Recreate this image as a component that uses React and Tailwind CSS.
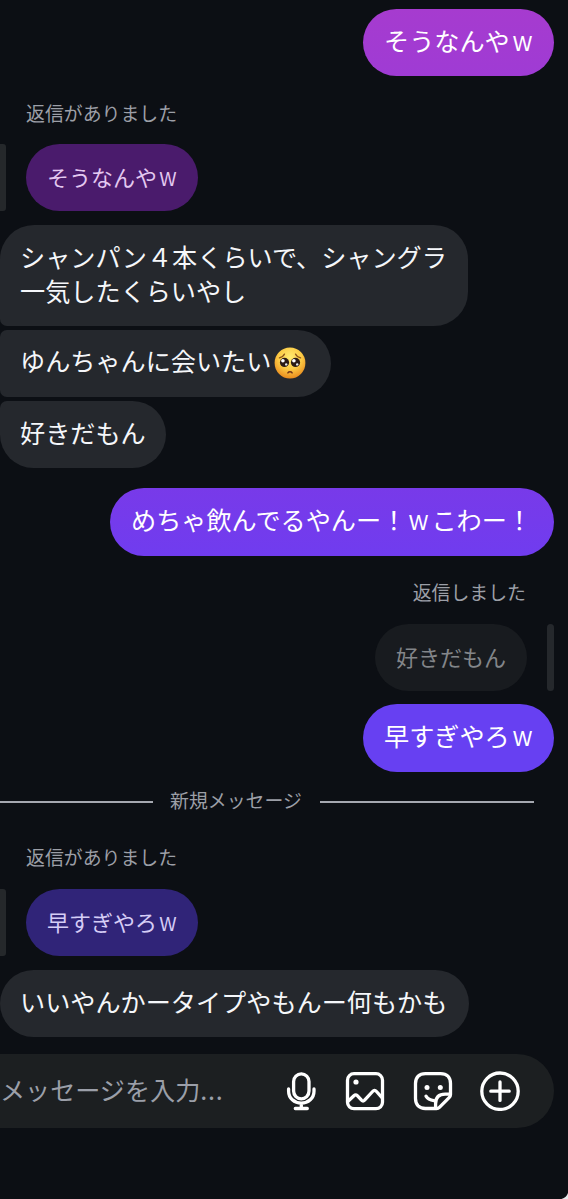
import React from "react";

const tones = {
  magenta: "bg-linear-to-b from-[#a63bcf] to-[#9f3bd4] text-white",
  violet: "bg-linear-to-b from-[#783ae9] to-[#703cef] text-white",
  indigo: "bg-[#6740f2] text-white",
  gray: "bg-[#25282d] text-[#f5f7fa]",
};

function Bubble({ tone, className = "", children }) {
  return (
    <div className={`flex shrink-0 items-center pb-[4px] whitespace-nowrap text-[25.15px] leading-[33.5px] ${tones[tone]} ${className}`}>
      <p>{children}</p>
    </div>
  );
}

function Quote({ className, children }) {
  return (
    <div className={`flex h-[67px] items-center rounded-full pb-[4px] pl-[21px] text-[22px] leading-none whitespace-nowrap ${className}`}>
      <p>{children}</p>
    </div>
  );
}

function Laugh() {
  return <span className="inline-block origin-[50%_78%] scale-x-[0.88] scale-y-[1.12]">ｗ</span>;
}

function Label({ className, children }) {
  return (
    <p className={`h-[26px] shrink-0 text-[18.9px] leading-[24px] whitespace-nowrap text-[#9c9fa7] ${className}`}>{children}</p>
  );
}

function PleadingFace() {
  return (
    <svg viewBox="0 0 32 32" className="-mt-1 inline-block size-8 align-middle" aria-label="🥺">
      <defs>
        <radialGradient id="face" cx="50%" cy="32%" r="68%">
          <stop offset="0" stopColor="#ffec72" />
          <stop offset="0.55" stopColor="#fccb45" />
          <stop offset="1" stopColor="#e98b1e" />
        </radialGradient>
      </defs>
      <circle cx="16" cy="16" r="15.4" fill="url(#face)" />
      <path d="M5.4 10.8c2.5-.4 4.2-1.7 5.1-3.7M26.6 10.8c-2.5-.4-4.2-1.7-5.1-3.7" fill="none" stroke="#8c5218" strokeWidth="1.3" strokeLinecap="round" />
      <circle cx="10.5" cy="15.4" r="4.6" fill="#2b1b16" />
      <circle cx="21.5" cy="15.4" r="4.6" fill="#2b1b16" />
      <circle cx="8.9" cy="13.8" r="1.8" fill="#fff" />
      <circle cx="19.9" cy="13.8" r="1.8" fill="#fff" />
      <circle cx="12.2" cy="17.4" r="1.2" fill="#e9edf2" />
      <circle cx="23.2" cy="17.4" r="1.2" fill="#e9edf2" />
      <path d="M13.9 25.9c.9-1.5 3.3-1.5 4.2 0" fill="none" stroke="#713419" strokeWidth="1.5" strokeLinecap="round" />
    </svg>
  );
}

function Icon({ children }) {
  return (
    <svg viewBox="0 0 40 40" className="size-10 shrink-0" fill="none" stroke="#fff" strokeWidth="3.3" strokeLinecap="round" strokeLinejoin="round">
      {children}
    </svg>
  );
}

export default function App() {
  return (
    <div className="relative flex h-[1199px] w-[568px] flex-col overflow-hidden bg-[#0c0f14] pt-[9px] font-['Noto_Sans_CJK_JP',sans-serif]" lang="ja">
      <Bubble tone="magenta" className="mr-[14px] h-[67px] w-[191px] self-end rounded-full pl-[21px]">そうなんや<Laugh /></Bubble>

      <Label className="mt-[25px] ml-[26px]">返信がありました</Label>
      <div className="mt-[17px] flex shrink-0 gap-5">
        <span className="w-[6px] rounded-r-[3px] bg-[#25282b]" />
        <Quote className="w-[172px] bg-[#4a1b6c] text-[#e3c8f0]">そうなんや<Laugh /></Quote>
      </div>

      <Bubble tone="gray" className="mt-[14px] h-[101px] w-[468px] rounded-[34px] rounded-bl-[7px] pl-5">
        シャンパン４本くらいで、シャングラ
        <br />
        一気したくらいやし
      </Bubble>
      <Bubble tone="gray" className="mt-1 h-[67px] w-[331px] rounded-r-[34px] rounded-l-[7px] pl-5">
        ゆんちゃんに会いたい
        <span className="ml-[3px]"><PleadingFace /></span>
      </Bubble>
      <Bubble tone="gray" className="mt-1 h-[67px] w-[166px] rounded-[34px] rounded-tl-[7px] pl-5">好きだもん</Bubble>

      <Bubble tone="violet" className="mt-[20px] mr-[14px] h-[68px] w-[444px] self-end rounded-full pl-[21px]">めちゃ飲んでるやんー！<Laugh />こわー！</Bubble>

      <Label className="mt-[24px] mr-[42px] self-end">返信しました</Label>
      <div className="mt-[18px] mr-[14px] flex shrink-0 gap-5 self-end">
        <Quote className="w-[152px] bg-[#181b1f] text-[#83868a]">好きだもん</Quote>
        <span className="w-[7px] rounded-full bg-[#25282c]" />
      </div>
      <Bubble tone="indigo" className="mt-[13px] mr-[14px] h-[68px] w-[191px] self-end rounded-full pl-[21px]">早すぎやろ<Laugh /></Bubble>

      <div className="mt-[16px] flex h-[26px] shrink-0 items-center">
        <span className="mt-px h-[2px] w-[153px] bg-[#a5a8b0]" />
        <Label className="ml-[17px] w-[150px]">新規メッセージ</Label>
        <span className="mt-px h-[2px] w-[214px] bg-[#a5a8b0]" />
      </div>

      <Label className="mt-[31px] ml-[26px]">返信がありました</Label>
      <div className="mt-[18px] flex shrink-0 gap-5">
        <span className="w-[6px] rounded-r-[3px] bg-[#25282b]" />
        <Quote className="w-[172px] bg-[#302478] text-[#d5cdf6]">早すぎやろ<Laugh /></Quote>
      </div>

      <Bubble tone="gray" className="mt-[14px] h-[67px] w-[469px] rounded-full pl-5">いいやんかータイプやもんー何もかも</Bubble>

      <div className="mt-[17px] flex h-[74px] w-[554px] shrink-0 items-center rounded-r-full bg-[#1c1f21] pr-[34px]">
        <p className="flex-1 pb-[2px] text-[25.1px] whitespace-nowrap text-[#9b9fa9]">メッセージを入力<span className="tracking-[0.8px]">...</span></p>
        <div className="flex items-center">
          <div className="mr-[24px] h-10"><Icon>
            <rect x="12.6" y="2.8" width="15.4" height="25" rx="7.7" />
            <path d="M7.6 18v2.2c0 7 5.7 11.9 12.7 11.9s12.7-4.9 12.7-11.9V18M20.3 32.5v5M14.3 37.5h12" />
          </Icon></div>
          <div className="mr-[28px] h-10"><Icon>
            <rect x="2.5" y="2.7" width="35" height="35" rx="6.5" />
            <circle cx="11" cy="11" r="2.6" fill="#fff" stroke="none" />
            <path d="m3.3 30 5.6-5.3c1.2-1.1 2.3-1.1 3.4 0l4.2 4.5c1 1 2.1 1 3.1 0l8-8.7c1.3-1.4 2.6-1.4 3.9 0l5.5 6.2" />
          </Icon></div>
          <div className="mr-[27px] h-10"><Icon>
            <path d="M23.5 37.5H12.4c-6.3 0-9.9-3.6-9.9-9.9v-15c0-6.3 3.6-9.9 9.9-9.9h15.2c6.3 0 9.9 3.6 9.9 9.9v10.8c0 1.4-.4 2.2-1.4 3.2L26.4 36.3c-.9.9-1.6 1.2-2.9 1.2Z" />
            <path d="M22.6 37v-4.2c0-6.3 3.3-9.6 9.6-9.6h5M13 25.2c1.5 2.5 4.2 4 7.8 4.4" />
            <circle cx="14" cy="16.6" r="2.5" fill="#fff" stroke="none" />
            <circle cx="27.3" cy="16.6" r="2.5" fill="#fff" stroke="none" />
          </Icon></div>
          <Icon>
            <circle cx="20" cy="20.2" r="18.2" />
            <path d="M20 11v18.4M10.8 20.2h18.4" />
          </Icon>
        </div>
      </div>

      <svg className="absolute right-0 bottom-0 size-2" viewBox="0 0 8 8" aria-hidden="true">
        <path d="M8 2v6H1.5C5 7 7 5 8 2Z" fill="#e8e9eb" />
      </svg>
    </div>
  );
}
